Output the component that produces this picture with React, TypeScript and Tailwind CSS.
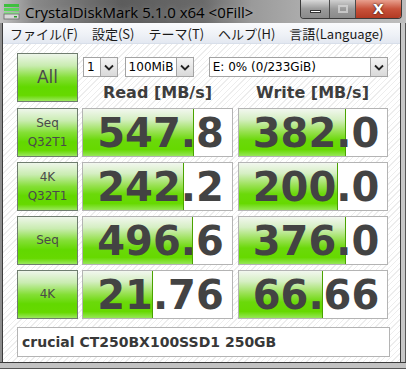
import React from 'react';

type Row = { label: string[]; read: string; write: string; rw: number; ww: number };

const rows: Row[] = [
  { label: ['Seq', 'Q32T1'], read: '547.8', write: '382.0', rw: 111, ww: 107 },
  { label: ['4K', 'Q32T1'], read: '242.2', write: '200.0', rw: 101, ww: 99 },
  { label: ['Seq'], read: '496.6', write: '376.0', rw: 110, ww: 107 },
  { label: ['4K'], read: '21.76', write: '66.66', rw: 70, ww: 84 },
];

const menus = ['ファイル(F)', '設定(S)', 'テーマ(T)', 'ヘルプ(H)', '言語(Language)'];

function TestButton({ lines }: { lines: string[] }) {
  const big = lines.length === 1 && lines[0] === 'All';
  return (
    <div className="h-[49px] border border-[#6f7d6f] bg-[linear-gradient(to_bottom,#eef6ea_0%,#c9ecb0_25%,#84df36_50%,#62d800_70%,#66d900_88%,#9be85e_100%)] flex flex-col items-center justify-center text-[#4a4a4a] font-['DejaVu_Sans',sans-serif] leading-[19px]">
      {lines.map((l) => (
        <span key={l} className={big ? 'text-[17px]' : 'text-[12px]'}>
          {l}
        </span>
      ))}
    </div>
  );
}

function Meter({ value, bar }: { value: string; bar: number }) {
  return (
    <div className="relative h-[49px] border border-[#b4b4b4] bg-white overflow-hidden">
      <div
        className="absolute left-0 top-0 bottom-0 border-r border-[#4aa300] bg-[linear-gradient(to_bottom,#f2f7ef_0%,#d6efc4_22%,#98e152_48%,#6bd90a_66%,#66d900_86%,#96e757_100%)]"
        style={{ width: bar }}
      />
      <div className="relative h-full flex items-center justify-center pl-[6px] text-[40px] font-bold text-[#434343] font-['DejaVu_Sans',sans-serif]">
        {value}
      </div>
    </div>
  );
}

function Select({ text, w }: { text: string; w: string }) {
  return (
    <div className={`${w} h-[20px] border border-[#a3a3a3] bg-white flex items-center justify-between`}>
      <span className="pl-[3px] text-[12px] text-black font-['DejaVu_Sans',sans-serif] leading-none">{text}</span>
      <div className="w-[17px] h-full border-l border-[#a3a3a3] bg-[linear-gradient(to_bottom,#f4f4f4,#d9d9d9)] flex items-center justify-center">
        <svg width="10" height="7" viewBox="0 0 10 7">
          <path d="M1 1.5 L5 5.5 L9 1.5" fill="none" stroke="#222" strokeWidth="1.8" />
        </svg>
      </div>
    </div>
  );
}

function AppIcon() {
  return (
    <svg width="17" height="17" viewBox="0 0 17 17">
      <rect x="1" y="1" width="15" height="3" fill="#3fbf3f" />
      <rect x="1" y="5" width="15" height="3" fill="#5ad35a" />
      <rect x="1" y="9" width="15" height="2" fill="#88dd88" />
      <rect x="1" y="11" width="15" height="5" fill="#d8d8d8" stroke="#6a6a6a" strokeWidth="0.8" />
      <rect x="11" y="13" width="3" height="1.5" fill="#2a9a2a" />
    </svg>
  );
}

export default function App() {
  return (
    <div className="w-[406px] h-[369px] flex flex-col bg-[#a9a9a9] overflow-hidden">
      {/* title bar */}
      <div className="h-[23px] flex items-start bg-[linear-gradient(to_right,#c2c2c2_0%,#8a8a8a_8%,#5c5c5c_30%,#6a6a6a_50%,#9a9a9a_62%,#b4b4b4_80%,#bdbdbd_100%)]">
        <div className="pl-[3px] pt-[3px]">
          <AppIcon />
        </div>
        <span className="pl-[5px] pt-[1px] text-[15px] text-black font-['Open_Sans',sans-serif] [text-shadow:0_0_6px_rgba(255,255,255,0.35)]">
          CrystalDiskMark 5.1.0 x64 &lt;0Fill&gt;
        </span>
        <div className="ml-auto mr-[4px] flex h-[19px] border border-[#3a3a3a] border-t-0 rounded-b-[4px] overflow-hidden">
          <div className="w-[29px] flex items-center justify-center bg-[linear-gradient(to_bottom,#d8d8d8,#9a9a9a_50%,#8a8a8a)] border-r border-[#4a4a4a]">
            <div className="w-[11px] h-[3px] bg-white border border-[#333] mt-[5px]" />
          </div>
          <div className="w-[26px] flex items-center justify-center bg-[linear-gradient(to_bottom,#d0d0d0,#9a9a9a_50%,#8a8a8a)] border-r border-[#4a4a4a]">
            <div className="w-[10px] h-[8px] border-2 border-[#dcdcdc] opacity-70" />
          </div>
          <div className="w-[45px] flex items-center justify-center bg-[linear-gradient(to_bottom,#e8a08e,#c8523a_50%,#b23a24)]">
            <span className="text-white font-bold text-[14px] leading-none font-['DejaVu_Sans',sans-serif] [text-shadow:0_0_2px_#000]">X</span>
          </div>
        </div>
      </div>

      <div className="flex flex-1">
        <div className="w-[3px] bg-[#8e8e8e] border-r border-[#3c3c3c]" />
        <div className="flex-1 flex flex-col">
          {/* menu bar */}
          <div className="h-[21px] flex items-center gap-[14px] pl-[7px] bg-[linear-gradient(to_bottom,#fafbfd,#eef1f6_60%,#e3e8f1)] border-b border-[#d8dfea]">
            {menus.map((m) => (
              <span key={m} className="text-[13px] text-[#1a1a1a] font-['Noto_Sans_CJK_JP',sans-serif] leading-none">
                {m}
              </span>
            ))}
          </div>
          {/* client */}
          <div className="flex-1 pl-[14px] pt-[9px] bg-[repeating-linear-gradient(135deg,#ffffff_0px,#ffffff_3px,#ededed_3px,#ededed_4px)]">
            <div className="grid grid-cols-[61px_151px_151px] gap-x-[4px] gap-y-[5px] w-[373px]">
              <TestButton lines={['All']} />
              <div className="col-span-2 flex flex-col">
                <div className="flex mt-[4px] ml-[1px]">
                  <Select text="1" w="w-[35px]" />
                  <div className="w-[7px]" />
                  <Select text="100MiB" w="w-[70px]" />
                  <div className="w-[15px]" />
                  <Select text="E: 0% (0/233GiB)" w="w-[181px]" />
                </div>
                <div className="flex mt-[6px] text-[16px] font-bold text-[#3d3d3d] font-['DejaVu_Sans',sans-serif] leading-[20px]">
                  <span className="w-[151px] text-center">Read [MB/s]</span>
                  <span className="w-[4px]" />
                  <span className="w-[151px] text-center">Write [MB/s]</span>
                </div>
              </div>
              {rows.map((r) => (
                <React.Fragment key={r.read}>
                  <TestButton lines={r.label} />
                  <Meter value={r.read} bar={r.rw} />
                  <div className="pl-[1px]">
                    <Meter value={r.write} bar={r.ww} />
                  </div>
                </React.Fragment>
              ))}
            </div>
            <div className="mt-[8px] w-[373px] h-[30px] border border-[#b4b4b4] bg-white flex items-center pl-[4px] text-[14px] font-bold text-[#383838] font-['DejaVu_Sans',sans-serif]">
              crucial CT250BX100SSD1 250GB
            </div>
          </div>
        </div>
        <div className="w-[6px] bg-[#c6c6c6] border-l border-[#3c3c3c] border-r border-r-[#555]" />
      </div>
      <div className="h-[7px] bg-[#c2c2c2] border-t border-[#3c3c3c] border-b border-b-[#555]" />
    </div>
  );
}
